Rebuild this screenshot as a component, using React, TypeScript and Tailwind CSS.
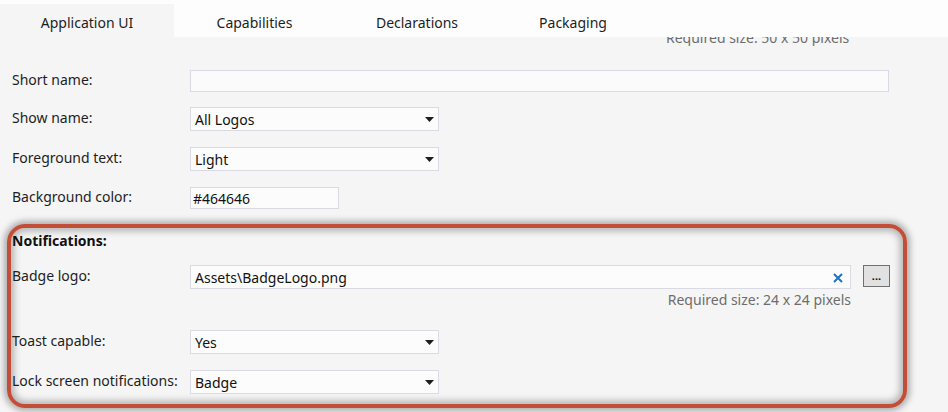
import React from 'react';

const font = { fontFamily: '"Noto Sans", "Open Sans", sans-serif' };

const tabs = [
  { label: 'Application UI', w: 'w-[174px]', active: true },
  { label: 'Capabilities', w: 'w-[161px]', active: false },
  { label: 'Declarations', w: 'w-[164px]', active: false },
  { label: 'Packaging', w: 'w-[148px]', active: false },
];

const Caret = () => (
  <svg width="9" height="5" viewBox="0 0 9 5" className="shrink-0">
    <path d="M0 0 H9 L4.5 5 Z" fill="#1e1e1e" />
  </svg>
);

const Select = ({ value }: { value: string }) => (
  <div className="flex h-[24px] w-[249px] items-center justify-between border border-[#dadae4] bg-[#fcfcfc] pl-[4px] pr-[4px] pt-[1px] text-[14px] text-[#111]">
    <span>{value}</span>
    <Caret />
  </div>
);

const Row = ({ label, children, className = '' }: { label: string; children: React.ReactNode; className?: string }) => (
  <div className={`flex items-center ${className}`}>
    <div className="w-[178px] shrink-0 -mt-[3px] text-[14px] text-[#1e1e1e]">{label}</div>
    {children}
  </div>
);

export default function App() {
  return (
    <div className="h-[412px] w-[948px] overflow-hidden bg-[#f5f5f5]" style={font}>
      <div className="flex h-[37px] bg-[#fdfdfd] pt-[4px]">
        {tabs.map((t) => (
          <div
            key={t.label}
            className={`${t.w} flex items-center justify-center pt-[3px] text-[14px] text-[#1e1e1e] ${t.active ? 'bg-[#f5f5f5]' : 'bg-[#fdfdfd]'}`}
          >
            {t.label}
          </div>
        ))}
      </div>

      {/* previous hint, mostly scrolled under the tab strip */}
      <div className="h-[9px] overflow-hidden pl-[666px]">
        <div className="-mt-[8px] text-[14px] leading-[17px] text-[#6d6d6d]">Required size: 50 x 50 pixels</div>
      </div>

      <div className="px-[12px]">
        <Row label="Short name:" className="mt-[24px]">
          <div className="h-[22px] w-[699px] border border-[#dadae4] bg-[#fbfbfb]" />
        </Row>
        <Row label="Show name:" className="mt-[15px]">
          <Select value="All Logos" />
        </Row>
        <Row label="Foreground text:" className="mt-[16px]">
          <Select value="Light" />
        </Row>
        <Row label="Background color:" className="mt-[16px]">
          <div className="flex h-[22px] w-[149px] items-center border border-[#dadae4] bg-[#fcfcfc] pl-[2px] text-[14px] text-[#111]">#464646</div>
        </Row>
      </div>

      <div className="ml-[7px] mt-[15px] h-[184px] w-[900px] rounded-[18px] border-[4px] border-[#c24e38] pl-[1px] pt-[3px] shadow-[0_0_6px_3px_rgba(0,0,0,0.3),inset_0_0_7px_3px_rgba(0,0,0,0.28)]">
        <div className="h-[20px] text-[14px] font-bold leading-[20px] text-[#111]">Notifications:</div>
        <Row label="Badge logo:" className="mt-[14px]">
          <div className="flex h-[24px] w-[661px] items-center justify-between border border-[#dadae4] bg-[#fcfcfc] pl-[4px] pr-[7px] pt-[1px] text-[14px] text-[#111]">
            <span>Assets\BadgeLogo.png</span>
            <svg width="10" height="10" viewBox="0 0 10 10">
              <path d="M1 1 L9 9 M9 1 L1 9" stroke="#1c72c4" strokeWidth="2" />
            </svg>
          </div>
          <div className="ml-[12px] flex h-[22px] w-[27px] items-center justify-center self-start border border-[#707070] bg-[#e1e1e1] text-[11px] leading-none text-[#111]">
            <span className="-mt-[2px] font-bold">...</span>
          </div>
        </Row>
        <div className="mt-[2px] w-[839px] text-right text-[14px] leading-[18px] text-[#6d6d6d]">Required size: 24 x 24 pixels</div>
        <Row label="Toast capable:" className="mt-[21px]">
          <Select value="Yes" />
        </Row>
        <Row label="Lock screen notifications:" className="mt-[16px]">
          <Select value="Badge" />
        </Row>
      </div>
    </div>
  );
}
